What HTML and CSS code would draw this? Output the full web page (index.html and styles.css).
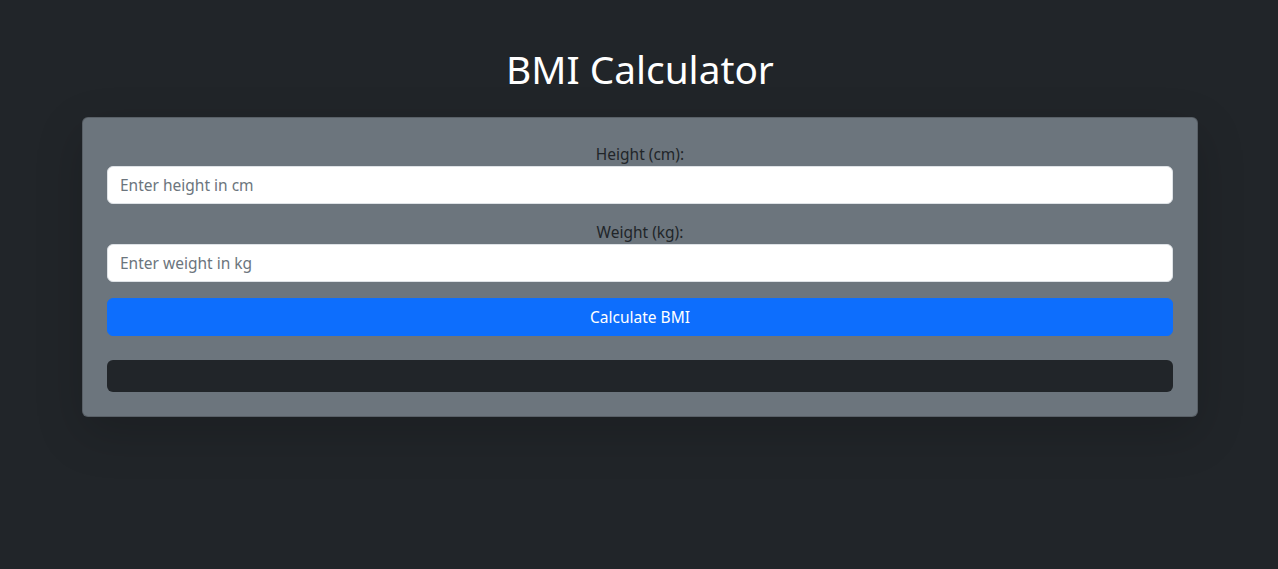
FILE: index.html
```html
<!DOCTYPE html>
<html lang="en">
<head>
<meta charset="utf-8">
<title>BMI Calculator</title>
<link rel="stylesheet" href="styles.css">
</head>
<body>
<main class="container">
  <h1 class="title">BMI Calculator</h1>
  <section class="card">
    <div class="field">
      <label class="label" for="height">Height (cm):</label>
      <input class="input" id="height" type="number" placeholder="Enter height in cm">
    </div>
    <div class="field">
      <label class="label" for="weight">Weight (kg):</label>
      <input class="input" id="weight" type="number" placeholder="Enter weight in kg">
    </div>
    <button class="btn" type="button">Calculate BMI</button>
    <div class="result"></div>
  </section>
</main>
</body>
</html>
```
FILE: styles.css
```css
* { box-sizing: border-box; }
html, body { height: 100%; }
body {
  margin: 0;
  background: #212529;
  color: #dee2e6;
  font-family: "Noto Sans", "Open Sans", sans-serif;
  font-size: 15.5px;
  line-height: 24px;
}
.container {
  width: 1140px;
  margin: 0 auto;
  padding: 45px 11px 0 13px;
}
.title {
  margin: 0 0 24px;
  font-size: 38.8px;
  font-weight: 400;
  line-height: 48px;
  text-align: center;
  color: #fff;
}
.card {
  background: #6c757d;
  border: 1px solid rgba(0,0,0,.175);
  border-radius: 6px;
  padding: 24px;
  box-shadow: 0 16px 48px rgba(0,0,0,.175);
  display: flex;
  flex-direction: column;
}
.field {
  display: flex;
  flex-direction: column;
  margin-bottom: 16px;
}
.label {
  text-align: center;
  color: #212529;
  height: 24px;
}
.input {
  height: 38px;
  padding: 6px 12px;
  border: 1px solid #dee2e6;
  border-radius: 6px;
  background: #fff;
  color: #212529;
  font: inherit;
}
.input::placeholder { color: #6c757d; }
.btn {
  height: 38px;
  border: 1px solid #0d6efd;
  border-radius: 6px;
  background: #0d6efd;
  color: #fff;
  font: inherit;
  padding: 6px 12px;
}
.result {
  margin-top: 24px;
  height: 32px;
  background: #212529;
  border-radius: 6px;
}
```
